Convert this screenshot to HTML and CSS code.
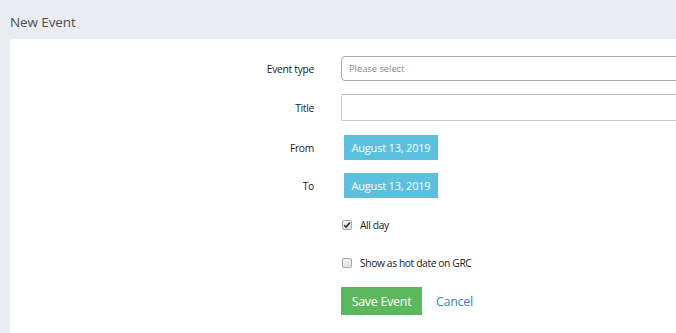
FILE: index.html
```html
<!DOCTYPE html>
<html>
<head>
<meta charset="utf-8">
<link rel="stylesheet" href="styles.css">
</head>
<body>
<div class="page">
  <h1 class="page-title">New Event</h1>
  <div class="panel">
    <form class="form">
      <div class="row r1">
        <label class="lbl">Event type</label>
        <div class="ctl"><div class="select">Please select</div></div>
      </div>
      <div class="row r2">
        <label class="lbl">Title</label>
        <div class="ctl"><div class="input"></div></div>
      </div>
      <div class="row r3">
        <label class="lbl">From</label>
        <div class="ctl"><span class="date-btn">August 13, 2019</span></div>
      </div>
      <div class="row r4">
        <label class="lbl">To</label>
        <div class="ctl"><span class="date-btn">August 13, 2019</span></div>
      </div>
      <div class="row r5">
        <div class="lbl"></div>
        <div class="ctl check-row">
          <span class="cbox"><svg width="8" height="8" viewBox="0 0 8 8"><path d="M1.2 4.2 L3.1 6.1 L6.9 1.6" fill="none" stroke="#333" stroke-width="1.6"/></svg></span>
          <span class="check-text">All day</span>
        </div>
      </div>
      <div class="row r6">
        <div class="lbl"></div>
        <div class="ctl check-row">
          <span class="cbox"></span>
          <span class="check-text">Show as hot date on GRC</span>
        </div>
      </div>
      <div class="row r7">
        <div class="lbl"></div>
        <div class="ctl actions">
          <span class="btn-save">Save Event</span>
          <a class="cancel">Cancel</a>
        </div>
      </div>
    </form>
  </div>
</div>
</body>
</html>
```

FILE: styles.css
```css
html, body {
  margin: 0;
  padding: 0;
  overflow: hidden;
  height: 100%;
}
body {
  background: #e9edf2;
  font-family: "Open Sans", "Noto Sans", sans-serif;
  color: #333;
}
.page {
  padding-left: 10px;
  height: 100%;
  display: flex;
  flex-direction: column;
}
.page-title {
  margin: 0;
  height: 39px;
  flex: none;
  line-height: 44px;
  font-size: 13.5px;
  font-weight: 400;
  color: #4f4f4f;
  letter-spacing: -0.1px;
}
.panel {
  flex: 1;
  background: #fff;
  border-top-left-radius: 3px;
  overflow: hidden;
  padding-top: 17px;
  box-sizing: border-box;
}
.form {
  display: flex;
  flex-direction: column;
}
.row {
  display: grid;
  grid-template-columns: 304px 1fr;
  column-gap: 27px;
}
.lbl {
  display: flex;
  align-items: center;
  justify-content: flex-end;
  font-size: 10.3px;
  color: #222;
  letter-spacing: -0.3px;
}
.ctl {
  display: flex;
  align-items: center;
}
.r1 { height: 25px; }
.r2 { height: 27px; margin-top: 13px; }
.r3 { height: 25px; margin-top: 14px; }
.r4 { height: 25px; margin-top: 13px; }
.r5 { height: 20px; margin-top: 17px; }
.r6 { height: 20px; margin-top: 18px; }
.r7 { height: 28px; margin-top: 14px; }

.select {
  box-sizing: border-box;
  width: 560px;
  flex: none;
  height: 25px;
  border: 1px solid #aaa;
  border-radius: 4px;
  padding-left: 7px;
  display: flex;
  align-items: center;
  font-size: 9.3px;
  color: #888;
}
.input {
  box-sizing: border-box;
  width: 560px;
  flex: none;
  height: 27px;
  border: 1px solid #c4c9cf;
  border-top-color: #b7bdc4;
  border-radius: 2px;
}
.date-btn {
  margin-left: 3px;
  width: 94px;
  height: 25px;
  background: #5bc0de;
  color: #fff;
  font-size: 11px;
  display: flex;
  align-items: center;
  justify-content: center;
  letter-spacing: -0.2px;
}
.check-row {
  gap: 8px;
}
.cbox {
  box-sizing: border-box;
  width: 10px;
  height: 10px;
  margin-left: 1px;
  border: 1px solid #a8a8a8;
  border-radius: 2px;
  background: linear-gradient(#f2f2f2, #e2e2e2);
  display: flex;
  align-items: center;
  justify-content: center;
}
.check-text {
  font-size: 10.3px;
  color: #222;
  letter-spacing: -0.4px;
}
.actions {
  gap: 14px;
}
.btn-save {
  width: 81px;
  height: 28px;
  background: #5cb85c;
  color: #fff;
  font-size: 12.5px;
  display: flex;
  align-items: center;
  justify-content: center;
  letter-spacing: -0.3px;
}
.cancel {
  color: #3a84c8;
  font-size: 12.5px;
  letter-spacing: -0.3px;
}
```
